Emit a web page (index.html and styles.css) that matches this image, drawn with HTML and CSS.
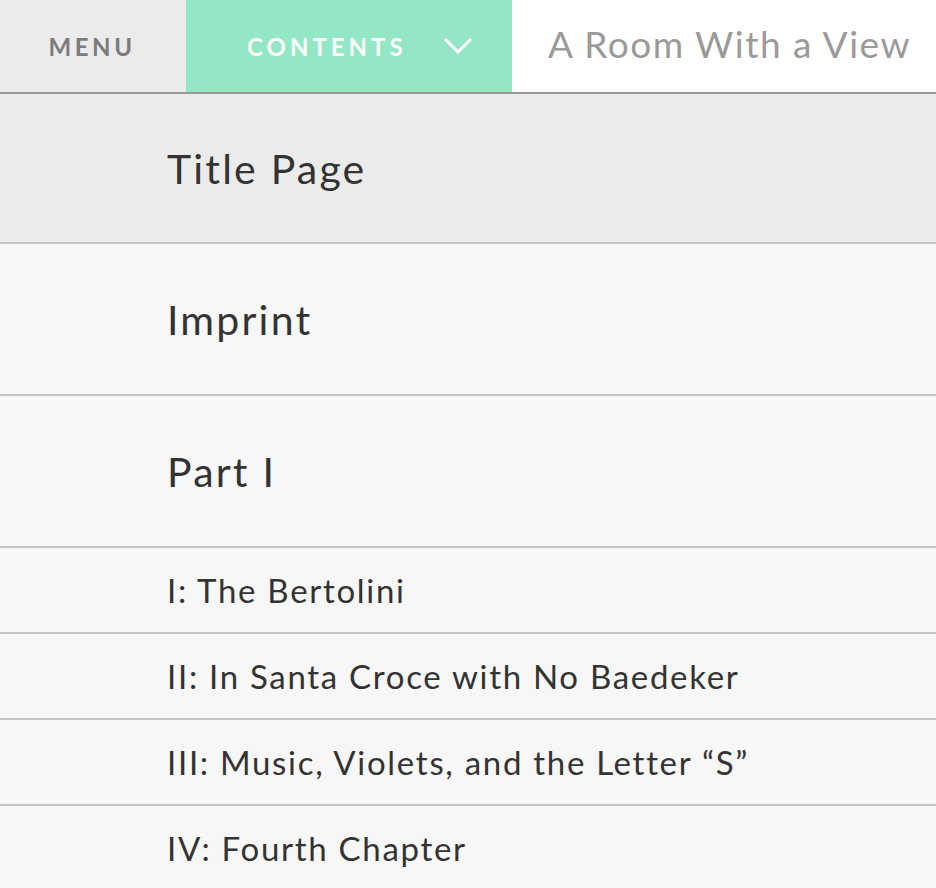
FILE: index.html
```html
<!DOCTYPE html>
<html lang="en">
<head>
<meta charset="utf-8">
<title>A Room With a View — Contents</title>
<link rel="stylesheet" href="styles.css">
</head>
<body>
<header class="topbar">
  <div class="menu-btn">MENU</div>
  <div class="contents-btn">
    <span class="contents-label">CONTENTS</span>
    <svg class="chevron" width="30" height="18" viewBox="0 0 30 18" aria-hidden="true">
      <polyline points="2,2 15,15 28,2" fill="none" stroke="#ffffff" stroke-width="3"/>
    </svg>
  </div>
  <div class="book-title">A Room With a View</div>
</header>
<ul class="toc">
  <li class="toc-item toc-large toc-current">Title Page</li>
  <li class="toc-item toc-large">Imprint</li>
  <li class="toc-item toc-large">Part I</li>
  <li class="toc-item toc-small">I: The Bertolini</li>
  <li class="toc-item toc-small">II: In Santa Croce with No Baedeker</li>
  <li class="toc-item toc-small">III: Music, Violets, and the Letter “S”</li>
  <li class="toc-item toc-small">IV: Fourth Chapter</li>
</ul>
</body>
</html>
```
FILE: styles.css
```css
html, body {
  margin: 0;
  padding: 0;
}
body {
  font-family: "Lato", "Open Sans", sans-serif;
  background: #f7f7f7;
  color: #333333;
  overflow: hidden;
}
.topbar {
  display: flex;
  height: 92px;
  border-bottom: 2px solid #9a9a9a;
  background: #ffffff;
}
.menu-btn {
  width: 186px;
  background: #ebebeb;
  color: #7b7b7b;
  font-size: 24px;
  font-weight: 700;
  letter-spacing: 3.6px;
  display: flex;
  align-items: center;
  justify-content: center;
  padding-right: 2px;
  box-sizing: border-box;
}
.contents-btn {
  width: 326px;
  background: #93e7c4;
  color: #ffffff;
  display: flex;
  align-items: center;
  padding-left: 61px;
  box-sizing: border-box;
  gap: 36px;
}
.contents-label {
  font-size: 24px;
  font-weight: 700;
  letter-spacing: 4px;
}
.chevron {
  display: block;
}
.book-title {
  flex: 1;
  color: #9a9a9a;
  font-size: 37px;
  letter-spacing: 1.5px;
  display: flex;
  align-items: center;
  padding-left: 36px;
  padding-bottom: 5px;
  box-sizing: border-box;
  white-space: nowrap;
}
.toc {
  list-style: none;
  margin: 0;
  padding: 0;
}
.toc-item {
  display: flex;
  align-items: center;
  padding-left: 167px;
  border-bottom: 2px solid #c4c4c4;
  background: #f7f7f7;
  white-space: nowrap;
}
.toc-large {
  height: 150px;
  font-size: 41px;
  letter-spacing: 2.2px;
}
.toc-current {
  height: 148px;
  background: #ebebeb;
}
.toc-small {
  height: 84px;
  font-size: 33px;
  letter-spacing: 1.7px;
}
```
